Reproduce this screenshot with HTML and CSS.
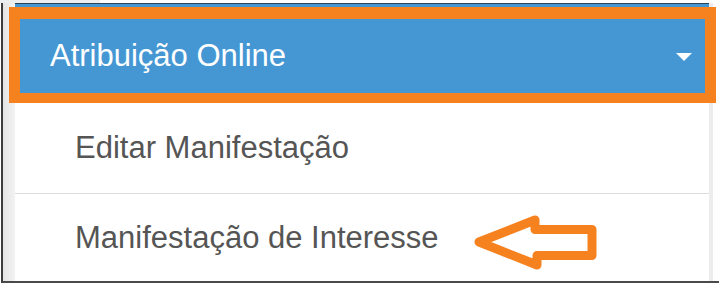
FILE: index.html
```html
<!DOCTYPE html>
<html lang="pt-BR">
<head>
<meta charset="utf-8">
<title>Atribuição Online</title>
<link rel="stylesheet" href="styles.css">
</head>
<body>
<div class="page">
  <div class="topstrip"></div>
  <div class="frame">
    <div class="lgutter"></div>
    <div class="panel">
      <div class="panel-header">
        <span class="panel-title">Atribuição Online</span>
        <span class="caret"></span>
      </div>
      <ul class="menu">
        <li class="menu-item">Editar Manifestação</li>
        <li class="menu-item menu-item-last">Manifestação de Interesse</li>
      </ul>
    </div>
    <div class="rgutter"></div>
  </div>
  <div class="highlight-box"></div>
  <svg class="arrow" width="135" height="66" viewBox="0 0 135 66" aria-hidden="true">
    <polygon points="9,32 65,10 65,19.5 122,19.5 122,45.5 67,45.5 67,55" fill="none" stroke="#f6821f" stroke-width="9" stroke-linejoin="round"/>
  </svg>
</div>
</body>
</html>
```
FILE: styles.css
```css
html, body {
  margin: 0;
  padding: 0;
  background: #ffffff;
}

.page {
  position: relative;
  width: 719px;
  height: 290px;
  overflow: hidden;
  font-family: "Liberation Sans", Arial, sans-serif;
}

.topstrip {
  height: 3px;
  background: linear-gradient(to right, #eceef0 0, #eceef0 100px, #ffffff 100px);
}

.frame {
  display: flex;
  margin-left: 1px;
  height: 278px;
  border-left: 2px solid #3c3c3c;
  border-bottom: 2px solid #4a4a4a;
}

.lgutter {
  width: 12px;
  flex: none;
  background: linear-gradient(to right, #e4e4e4, #f3f3f3);
}

.panel {
  flex: none;
  width: 694px;
  display: flex;
  flex-direction: column;
}

.rgutter {
  width: 4px;
  flex: none;
  background: #ececec;
}

.panel-header {
  display: flex;
  align-items: flex-start;
  height: 99px;
  box-sizing: content-box;
  border-top: 1px solid #2d4356;
  background: #4597d4;
  padding: 34px 17px 0 35px;
  box-sizing: border-box;
  height: 100px;
}

.panel-title {
  color: #ffffff;
  font-size: 31px;
  line-height: 36px;
}

.caret {
  margin-left: auto;
  margin-top: 15px;
  width: 0;
  height: 0;
  border-left: 8px solid transparent;
  border-right: 8px solid transparent;
  border-top: 8px solid #ffffff;
}

.menu {
  list-style: none;
  margin: 0;
  padding: 0;
}

.menu-item {
  color: #555555;
  font-size: 31px;
  line-height: 36px;
  padding: 27px 0 27px 60px;
  border-bottom: 1px solid #dedede;
}

.menu-item-last {
  padding-top: 26px;
  padding-bottom: 24px;
  border-bottom: none;
}

.highlight-box {
  position: absolute;
  left: 9px;
  top: 7px;
  width: 707px;
  height: 96px;
  box-sizing: border-box;
  border-style: solid;
  border-color: #f6821f;
  border-width: 12px 11px 10px 11px;
}

.arrow {
  position: absolute;
  left: 470px;
  top: 210px;
}
```
